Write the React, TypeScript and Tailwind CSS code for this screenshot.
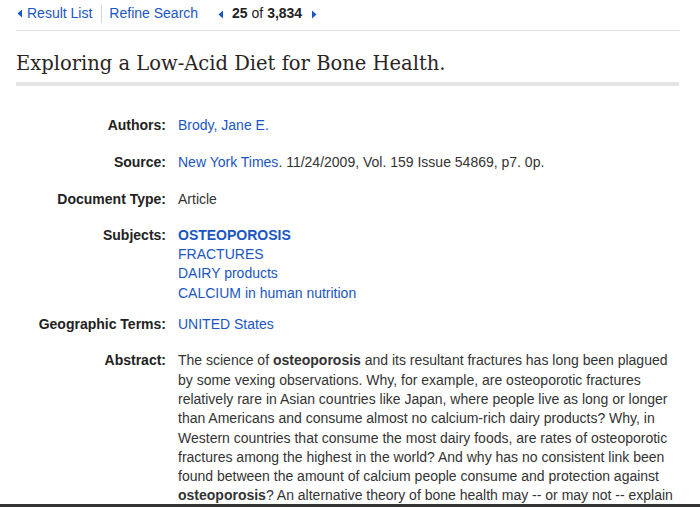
import { ReactNode } from "react";

const LINK = "text-[#1a56c4]";

function Caret({ dir }: { dir: "left" | "right" }) {
  return (
    <svg width="6" height="9" viewBox="0 0 6 9" className="inline-block fill-[#1a56c4]">
      {dir === "left" ? <path d="M5 0.5 L0.5 4.5 L5 8.5 Z" /> : <path d="M1 0.5 L5.5 4.5 L1 8.5 Z" />}
    </svg>
  );
}

function Row({ label, children, className = "" }: { label: string; children: ReactNode; className?: string }) {
  return (
    <div className={`flex ${className}`}>
      <div className="w-[150px] shrink-0 text-right font-bold text-[#222]">{label}</div>
      <div className="ml-[12px] flex-1 text-[#333]">{children}</div>
    </div>
  );
}

export default function App() {
  return (
    <div
      className="h-[507px] w-[700px] overflow-hidden bg-white text-[14px] leading-[19.3px] border-b-[3px] border-[#333]"
      style={{ fontFamily: '"Liberation Sans", Arial, sans-serif' }}
    >
      <div className="mx-4 w-[663px]">
        {/* nav bar */}
        <div className="flex h-[31px] items-center border-b border-[#e2e2e2] pb-[2px]">
          <a className={`flex items-center gap-[4px] pl-[1px] ${LINK}`}>
            <Caret dir="left" />
            Result List
          </a>
          <span className="ml-[9px] mr-[7px] h-[18px] w-px bg-[#d6d6d6]" />
          <a className={LINK}>Refine Search</a>
          <span className="ml-[20px] mr-[8px] flex items-center">
            <Caret dir="left" />
          </span>
          <span className="text-[#222]">
            <b>25</b> of <b>3,834</b>
          </span>
          <span className="ml-[9px] flex items-center">
            <Caret dir="right" />
          </span>
        </div>

        {/* title */}
        <h1
          className="mt-[22px] h-[33px] border-b-4 border-[#e4e4e4] text-[19.5px] leading-[22px] text-[#2a241f]"
          style={{ fontFamily: '"DejaVu Serif", Georgia, serif' }}
        >
          Exploring a Low-Acid Diet for Bone Health.
        </h1>

        {/* record details */}
        <div className="mt-[30px]">
          <Row label="Authors:">
            <a className={LINK}>Brody, Jane E.</a>
          </Row>
          <Row label="Source:" className="mt-[18px]">
            <a className={LINK}>New York Times</a>. 11/24/2009, Vol. 159 Issue 54869, p7. 0p.
          </Row>
          <Row label="Document Type:" className="mt-[17px]">
            Article
          </Row>
          <Row label="Subjects:" className="mt-[17px]">
            <div className="flex flex-col items-start">
              <a className={`${LINK} font-bold`}>OSTEOPOROSIS</a>
              <a className={LINK}>FRACTURES</a>
              <a className={LINK}>DAIRY products</a>
              <a className={LINK}>CALCIUM in human nutrition</a>
            </div>
          </Row>
          <Row label="Geographic Terms:" className="mt-[12px]">
            <a className={LINK}>UNITED States</a>
          </Row>
          <Row label="Abstract:" className="mt-[17px]">
            <p>
              The science of <b>osteoporosis</b> and its resultant fractures has long been plagued by some vexing
              observations. Why, for example, are osteoporotic fractures relatively rare in Asian countries like Japan,
              where people live as long or longer than Americans and consume almost no calcium-rich dairy products?
              Why, in Western countries that consume the most dairy foods, are rates of osteoporotic fractures among
              the highest in the world? And why has no consistent link been found between the amount of calcium
              people consume and protection against <b>osteoporosis</b>? An alternative theory of bone health may --
              or may not -- explain these observations.
            </p>
          </Row>
        </div>
      </div>
    </div>
  );
}
